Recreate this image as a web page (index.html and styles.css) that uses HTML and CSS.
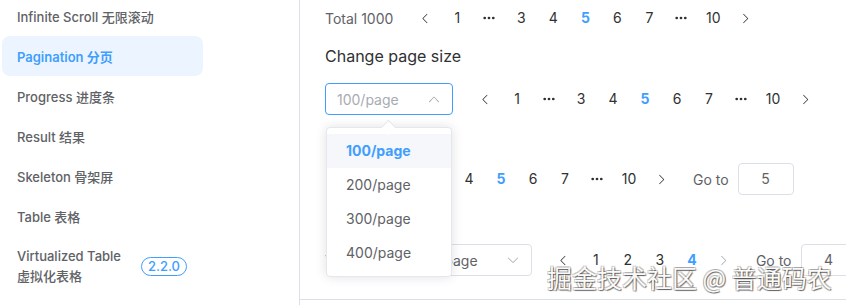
FILE: index.html
```html
<!DOCTYPE html>
<html lang="en">
<head>
    <meta charset="UTF-8">
    <meta name="viewport" content="width=device-width, initial-scale=1.0">
    <title>Pagination</title>
    <link rel="stylesheet" href="styles.css">
</head>
<body>
    <div class="layout">
        <aside class="sidebar">
            <ul class="nav">
                <li class="nav-item">Infinite Scroll 无限滚动</li>
                <li class="nav-item active">Pagination 分页</li>
                <li class="nav-item">Progress 进度条</li>
                <li class="nav-item">Result 结果</li>
                <li class="nav-item">Skeleton 骨架屏</li>
                <li class="nav-item">Table 表格</li>
                <li class="nav-item nav-item-tall">
                    <span>Virtualized Table<br>虚拟化表格</span>
                    <span class="badge">2.2.0</span>
                </li>
            </ul>
        </aside>

        <main class="content">
            <div class="demo">
                <!-- total + pager -->
                <div class="pagination">
                    <span class="total">Total 1000</span>
                    <button class="btn-arrow"><svg viewBox="0 0 1024 1024"><path d="M609.408 149.376 277.76 489.6a32 32 0 0 0 0 44.672l331.648 340.352a29.12 29.12 0 0 0 41.728 0 30.592 30.592 0 0 0 0-42.752L339.264 511.936l311.872-319.872a30.592 30.592 0 0 0 0-42.688 29.12 29.12 0 0 0-41.728 0z"/></svg></button>
                    <ul class="pager">
                        <li>1</li>
                        <li class="more"><svg viewBox="0 0 14 4"><circle cx="2" cy="2" r="1.6"/><circle cx="7" cy="2" r="1.6"/><circle cx="12" cy="2" r="1.6"/></svg></li>
                        <li>3</li>
                        <li>4</li>
                        <li class="is-active">5</li>
                        <li>6</li>
                        <li>7</li>
                        <li class="more"><svg viewBox="0 0 14 4"><circle cx="2" cy="2" r="1.6"/><circle cx="7" cy="2" r="1.6"/><circle cx="12" cy="2" r="1.6"/></svg></li>
                        <li>10</li>
                    </ul>
                    <button class="btn-arrow"><svg viewBox="0 0 1024 1024"><path d="M340.864 149.312a30.592 30.592 0 0 0 0 42.752L652.736 512 340.864 831.872a30.592 30.592 0 0 0 0 42.752 29.12 29.12 0 0 0 41.728 0L714.24 534.336a32 32 0 0 0 0-44.672L382.592 149.376a29.12 29.12 0 0 0-41.728 0z"/></svg></button>
                </div>

                <h3 class="demo-title">Change page size</h3>

                <!-- sizes + pager -->
                <div class="pagination row-sizes">
                    <div class="select is-focus">
                        <span class="select-placeholder">100/page</span>
                        <svg class="select-arrow" viewBox="0 0 1024 1024"><path d="m488.832 344.32-339.84 356.672a32 32 0 0 0 0 44.16l.384.384a29.440 29.440 0 0 0 42.688 0l320-335.872 319.872 335.872a29.44 29.44 0 0 0 42.688 0l.384-.384a32 32 0 0 0 0-44.16L535.168 344.32a32 32 0 0 0-46.336 0z"/></svg>
                    </div>
                    <button class="btn-arrow"><svg viewBox="0 0 1024 1024"><path d="M609.408 149.376 277.76 489.6a32 32 0 0 0 0 44.672l331.648 340.352a29.12 29.12 0 0 0 41.728 0 30.592 30.592 0 0 0 0-42.752L339.264 511.936l311.872-319.872a30.592 30.592 0 0 0 0-42.688 29.12 29.12 0 0 0-41.728 0z"/></svg></button>
                    <ul class="pager">
                        <li>1</li>
                        <li class="more"><svg viewBox="0 0 14 4"><circle cx="2" cy="2" r="1.6"/><circle cx="7" cy="2" r="1.6"/><circle cx="12" cy="2" r="1.6"/></svg></li>
                        <li>3</li>
                        <li>4</li>
                        <li class="is-active">5</li>
                        <li>6</li>
                        <li>7</li>
                        <li class="more"><svg viewBox="0 0 14 4"><circle cx="2" cy="2" r="1.6"/><circle cx="7" cy="2" r="1.6"/><circle cx="12" cy="2" r="1.6"/></svg></li>
                        <li>10</li>
                    </ul>
                    <button class="btn-arrow"><svg viewBox="0 0 1024 1024"><path d="M340.864 149.312a30.592 30.592 0 0 0 0 42.752L652.736 512 340.864 831.872a30.592 30.592 0 0 0 0 42.752 29.12 29.12 0 0 0 41.728 0L714.24 534.336a32 32 0 0 0 0-44.672L382.592 149.376a29.12 29.12 0 0 0-41.728 0z"/></svg></button>
                </div>

                <!-- pager + jumper -->
                <div class="pagination row-jump">
                    <button class="btn-arrow"><svg viewBox="0 0 1024 1024"><path d="M609.408 149.376 277.76 489.6a32 32 0 0 0 0 44.672l331.648 340.352a29.12 29.12 0 0 0 41.728 0 30.592 30.592 0 0 0 0-42.752L339.264 511.936l311.872-319.872a30.592 30.592 0 0 0 0-42.688 29.12 29.12 0 0 0-41.728 0z"/></svg></button>
                    <ul class="pager">
                        <li>1</li>
                        <li class="more"><svg viewBox="0 0 14 4"><circle cx="2" cy="2" r="1.6"/><circle cx="7" cy="2" r="1.6"/><circle cx="12" cy="2" r="1.6"/></svg></li>
                        <li>3</li>
                        <li>4</li>
                        <li class="is-active">5</li>
                        <li>6</li>
                        <li>7</li>
                        <li class="more"><svg viewBox="0 0 14 4"><circle cx="2" cy="2" r="1.6"/><circle cx="7" cy="2" r="1.6"/><circle cx="12" cy="2" r="1.6"/></svg></li>
                        <li>10</li>
                    </ul>
                    <button class="btn-arrow"><svg viewBox="0 0 1024 1024"><path d="M340.864 149.312a30.592 30.592 0 0 0 0 42.752L652.736 512 340.864 831.872a30.592 30.592 0 0 0 0 42.752 29.12 29.12 0 0 0 41.728 0L714.24 534.336a32 32 0 0 0 0-44.672L382.592 149.376a29.12 29.12 0 0 0-41.728 0z"/></svg></button>
                    <span class="jumper">Go to <span class="jumper-input">5</span></span>
                </div>

                <!-- all combined -->
                <div class="pagination row-all">
                    <span class="total">Total 400</span>
                    <div class="select">
                        <span class="select-value">100/page</span>
                        <svg class="select-arrow" viewBox="0 0 1024 1024"><path d="M831.872 340.864 512 652.672 192.128 340.864a30.592 30.592 0 0 0-42.752 0 29.12 29.12 0 0 0 0 41.6L489.664 714.24a32 32 0 0 0 44.672 0l340.288-331.712a29.12 29.12 0 0 0 0-41.728 30.592 30.592 0 0 0-42.752 0z"/></svg>
                    </div>
                    <button class="btn-arrow"><svg viewBox="0 0 1024 1024"><path d="M609.408 149.376 277.76 489.6a32 32 0 0 0 0 44.672l331.648 340.352a29.12 29.12 0 0 0 41.728 0 30.592 30.592 0 0 0 0-42.752L339.264 511.936l311.872-319.872a30.592 30.592 0 0 0 0-42.688 29.12 29.12 0 0 0-41.728 0z"/></svg></button>
                    <ul class="pager">
                        <li>1</li>
                        <li>2</li>
                        <li>3</li>
                        <li class="is-active">4</li>
                    </ul>
                    <button class="btn-arrow is-disabled"><svg viewBox="0 0 1024 1024"><path d="M340.864 149.312a30.592 30.592 0 0 0 0 42.752L652.736 512 340.864 831.872a30.592 30.592 0 0 0 0 42.752 29.12 29.12 0 0 0 41.728 0L714.24 534.336a32 32 0 0 0 0-44.672L382.592 149.376a29.12 29.12 0 0 0-41.728 0z"/></svg></button>
                    <span class="jumper">Go to <span class="jumper-input">4</span></span>
                </div>

                <!-- open select menu -->
                <div class="select-dropdown">
                    <span class="dropdown-arrow"></span>
                    <ul class="dropdown-list">
                        <li class="dropdown-item is-selected">100/page</li>
                        <li class="dropdown-item">200/page</li>
                        <li class="dropdown-item">300/page</li>
                        <li class="dropdown-item">400/page</li>
                    </ul>
                </div>
            </div>
        </main>
    </div>

    <div class="watermark">掘金技术社区 @ 普通码农</div>
</body>
</html>
```

FILE: styles.css
```css
body {
    margin: 0;
    width: 846px;
    height: 305px;
    overflow: hidden;
    font-family: Inter, "Noto Sans CJK SC", sans-serif;
    color: #303133;
    background: #fff;
    position: relative;
}
ul {
    list-style: none;
    margin: 0;
    padding: 0;
}
.layout {
    display: flex;
    height: 305px;
}

/* sidebar */
.sidebar {
    width: 299px;
    flex-shrink: 0;
    border-right: 1px solid #dcdfe6;
}
.nav {
    margin-top: -4px;
    padding-left: 2px;
}
.nav-item {
    width: 201px;
    height: 40px;
    box-sizing: border-box;
    padding: 0 16px 0 15px;
    display: flex;
    align-items: center;
    font-size: 13px;
    font-weight: 500;
    color: #606266;
    border-radius: 8px;
}
.nav-item.active {
    background-color: #ecf5ff;
    color: #409eff;
    font-weight: 600;
}
.nav-item-tall {
    height: 60px;
    line-height: 20px;
    justify-content: space-between;
}
.badge {
    font-size: 13px;
    line-height: 17px;
    padding: 0 6px;
    border: 1px solid #409eff;
    border-radius: 10px;
    color: #409eff;
    font-weight: 500;
}

/* demo area */
.content {
    flex: 1;
}
.demo {
    position: relative;
    height: 300px;
    box-sizing: border-box;
    padding: 2px 0 0 25px;
    border-bottom: 1px solid #dcdfe6;
}
.demo-title {
    margin: 10px 0 15px;
    font-size: 16px;
    line-height: 24px;
    font-weight: 400;
    color: #303133;
}

/* pagination */
.pagination {
    display: flex;
    align-items: center;
    height: 32px;
    font-size: 14px;
    white-space: nowrap;
}
.row-sizes {
    margin-top: 15px;
}
.row-jump {
    margin-top: 48px;
}
.row-all {
    margin-top: 49px;
}
.total {
    color: #606266;
    margin-right: 16px;
}
.btn-arrow {
    width: 32px;
    height: 32px;
    padding: 0;
    border: none;
    background: none;
    display: flex;
    align-items: center;
    justify-content: center;
    color: #303133;
}
.btn-arrow svg {
    width: 13px;
    height: 13px;
    fill: currentColor;
}
.btn-arrow.is-disabled {
    color: #a8abb2;
}
.pager {
    display: flex;
}
.pager li {
    min-width: 32px;
    height: 32px;
    line-height: 32px;
    text-align: center;
    color: #303133;
}
.pager li.is-active {
    color: #409eff;
    font-weight: 700;
}
.pager li.more {
    display: flex;
    align-items: center;
    justify-content: center;
}
.pager li.more svg {
    width: 12px;
    height: 4px;
    fill: #303133;
}
.jumper {
    margin-left: 16px;
    color: #606266;
    display: flex;
    align-items: center;
}
.jumper-input {
    margin-left: 9px;
    width: 56px;
    height: 32px;
    box-sizing: border-box;
    border: 1px solid #dcdfe6;
    border-radius: 4px;
    line-height: 30px;
    text-align: center;
    color: #606266;
}

/* select */
.select {
    width: 128px;
    height: 32px;
    box-sizing: border-box;
    margin-right: 16px;
    padding: 0 11px;
    border: 1px solid #dcdfe6;
    border-radius: 4px;
    display: flex;
    align-items: center;
    justify-content: space-between;
}
.select.is-focus {
    border-color: #409eff;
}
.select-placeholder {
    color: #a8abb2;
}
.select-value {
    color: #606266;
}
.select-arrow {
    width: 14px;
    height: 14px;
    fill: #a8abb2;
}

/* dropdown menu */
.select-dropdown {
    position: absolute;
    left: 26px;
    top: 127px;
    width: 126px;
    box-sizing: border-box;
    background: #fff;
    border: 1px solid #e4e7ed;
    border-radius: 4px;
    box-shadow: 0 0 12px rgba(0, 0, 0, 0.12);
}
.dropdown-arrow {
    position: absolute;
    top: -6px;
    left: 56px;
    width: 10px;
    height: 10px;
    background: #fff;
    border-top: 1px solid #e4e7ed;
    border-left: 1px solid #e4e7ed;
    transform: rotate(45deg);
}
.dropdown-list {
    padding: 6px 0;
}
.dropdown-item {
    height: 34px;
    line-height: 34px;
    padding: 0 19px;
    font-size: 14px;
    color: #606266;
}
.dropdown-item.is-selected {
    background: #f5f7fa;
    color: #409eff;
    font-weight: 700;
}

/* site watermark */
.watermark {
    position: absolute;
    left: 547px;
    top: 265px;
    font-family: "Noto Sans CJK SC", sans-serif;
    font-size: 25px;
    line-height: 1;
    color: #fafafa;
    text-shadow: 1px 1px 1px rgba(0, 0, 0, 0.55), -1px -1px 0 rgba(0, 0, 0, 0.2), 1px -1px 0 rgba(0, 0, 0, 0.2), -1px 1px 0 rgba(0, 0, 0, 0.2);
    white-space: nowrap;
}
```
